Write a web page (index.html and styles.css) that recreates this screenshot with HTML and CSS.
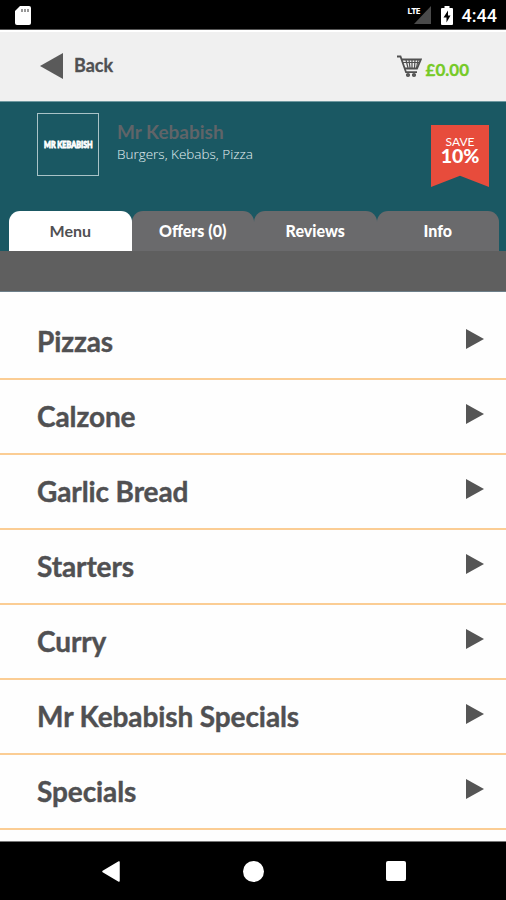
FILE: index.html
```html
<!DOCTYPE html>
<html lang="en">
<head>
    <meta charset="UTF-8">
    <meta name="viewport" content="width=device-width, initial-scale=1.0">
    <title>Mr Kebabish</title>
    <link rel="stylesheet" href="styles.css">
</head>
<body>
    <div class="status-bar">
        <svg class="sd-card" width="16" height="19" viewBox="0 0 16 19">
            <path d="M5 0H14Q16 0 16 2V17Q16 19 14 19H2Q0 19 0 17V5Z" fill="#fff"/>
            <path d="M7 3V6M10 3V6M13 3V6" stroke="#777" stroke-width="1.5"/>
        </svg>
        <div class="status-right">
            <span class="lte">LTE</span>
            <svg class="signal" width="17" height="18" viewBox="0 0 17 18">
                <path d="M17 0V18H0Z" fill="#4a4a4a"/>
            </svg>
            <svg class="battery" width="12" height="19" viewBox="0 0 12 19">
                <path d="M3.5 0H8.5V2H11Q12 2 12 3V18Q12 19 11 19H1Q0 19 0 18V3Q0 2 1 2H3.5Z" fill="#fff"/>
                <path d="M7 4.500L2.500 11.500H5.500V16.500L9.500 9.500H7Z" fill="#000"/>
            </svg>
            <span class="clock">4:44</span>
        </div>
    </div>

    <header class="top-bar">
        <a class="back">
            <svg width="23" height="26" viewBox="0 0 23 26"><path d="M23 0V26L0 13Z" fill="#5a5a5a"/></svg>
            <span>Back</span>
        </a>
        <a class="cart">
            <svg width="25" height="23" viewBox="0 0 25 23" fill="none" stroke="#505050">
                <path d="M0 1.500H3.500L9 17.200H20" stroke-width="1.800"/>
                <path d="M5 4.500H23.800L20 13.500H8" stroke-width="1.800"/>
                <path d="M9 5L11 13M12 5L13 13M15 5V13M18 5L17.500 13M21 5L19.500 13M6 7.500H22.500" stroke-width="1.200"/>
                <circle cx="11" cy="20" r="1.200" stroke-width="1.800"/>
                <circle cx="17" cy="20" r="1.200" stroke-width="1.800"/>
            </svg>
            <span>£0.00</span>
        </a>
    </header>

    <section class="shop">
        <div class="shop-info">
            <div class="logo"><span>MR KEBABISH</span></div>
            <div class="shop-text">
                <h1>Mr Kebabish</h1>
                <p>Burgers, Kebabs, Pizza</p>
            </div>
            <div class="ribbon">
                <span>SAVE</span>
                <strong>10%</strong>
            </div>
        </div>
        <nav class="tabs">
            <a class="tab active">Menu</a>
            <a class="tab">Offers (0)</a>
            <a class="tab">Reviews</a>
            <a class="tab">Info</a>
        </nav>
    </section>
    <div class="strip"></div>

    <ul class="menu">
        <li><span>Pizzas</span><i class="arrow"></i></li>
        <li><span>Calzone</span><i class="arrow"></i></li>
        <li><span>Garlic Bread</span><i class="arrow"></i></li>
        <li><span>Starters</span><i class="arrow"></i></li>
        <li><span>Curry</span><i class="arrow"></i></li>
        <li><span>Mr Kebabish Specials</span><i class="arrow"></i></li>
        <li><span>Specials</span><i class="arrow"></i></li>
    </ul>

    <footer class="nav-bar">
        <svg width="18" height="21" viewBox="0 0 18 21"><path d="M17 1V20L1 10.500Z" fill="#fff" stroke="#fff" stroke-width="1.500" stroke-linejoin="round"/></svg>
        <span class="home"></span>
        <span class="recent"></span>
    </footer>
</body>
</html>
```
FILE: styles.css
```css
* {
    box-sizing: border-box;
}
body {
    font-family: Lato, "Liberation Sans", sans-serif;
    margin: 0;
    height: 900px;
    display: flex;
    flex-direction: column;
    overflow: hidden;
    background: #fefefe;
    color: #505052;
}
.status-bar {
    height: 30px;
    flex: none;
    display: flex;
    justify-content: space-between;
    align-items: flex-start;
    padding: 6px 9px 0 15px;
    background: #000;
    border-bottom: 1px solid #555;
}
.status-right {
    display: flex;
    align-items: flex-start;
    color: #fff;
}
.lte {
    font: bold 9px/9px "Open Sans", sans-serif;
    letter-spacing: -1px;
    margin-right: -6px;
}
.signal {
    margin-right: 1px;
}
.battery {
    margin-left: 9px;
}
.clock {
    font: 500 18px/20px Roboto, sans-serif;
    margin-left: 9px;
}
.top-bar {
    height: 71px;
    flex: none;
    display: flex;
    justify-content: space-between;
    padding: 23px 37px 0 40px;
    background: #f0f0f0;
    border-top: 2px solid #fff;
}
.back {
    display: flex;
    height: 22px;
    align-items: center;
    gap: 11px;
    font-size: 18px;
    font-weight: bold;
    -webkit-text-stroke: 0.3px;
}
.back span {
    margin-bottom: 3px;
}
.cart {
    display: flex;
    align-items: flex-start;
    gap: 4px;
    color: #76ca27;
    font-size: 17px;
    font-weight: bold;
    -webkit-text-stroke: 0.3px;
}
.cart span {
    line-height: 22px;
    padding-top: 4px;
}
.shop {
    height: 150px;
    flex: none;
    display: flex;
    flex-direction: column;
    justify-content: space-between;
    background: #1a5863;
    border-top: 1px solid #6f98a0;
}
.shop-info {
    display: flex;
    padding: 11px 17px 0 37px;
}
.logo {
    width: 62px;
    height: 63px;
    display: flex;
    align-items: center;
    justify-content: center;
    border: 1px solid #a9c3c7;
}
.logo span {
    font-size: 9px;
    font-weight: 900;
    color: #fff;
    white-space: nowrap;
    transform: scaleX(0.8);
    -webkit-text-stroke: 0.8px #fff;
}
.shop-text {
    margin-left: 18px;
    padding-top: 7px;
}
.shop-text h1 {
    margin: 0;
    font-size: 19px;
    line-height: 24px;
    color: #606468;
}
.shop-text p {
    margin: 0;
    font: 300 13.5px/21px "Open Sans", sans-serif;
    color: #e4f0f2;
}
.ribbon {
    width: 58px;
    height: 62px;
    margin: 12px 0 0 auto;
    padding-top: 10px;
    display: flex;
    flex-direction: column;
    align-items: center;
    background: #e74c3c;
    color: #fff;
    clip-path: polygon(0 0, 100% 0, 100% 100%, 50% 82%, 0 100%);
}
.ribbon span {
    font-size: 12px;
    line-height: 13px;
}
.ribbon strong {
    font-size: 19.5px;
    line-height: 16px;
    font-weight: 900;
}
.tabs {
    display: flex;
    padding: 0 7px 0 9px;
}
.tab {
    flex: 1;
    height: 40px;
    line-height: 39px;
    text-align: center;
    font-size: 16px;
    font-weight: 900;
    color: #fff;
    background: #6a6a6c;
    border-radius: 11px 11px 0 0;
}
.tab.active {
    background: #fff;
    color: #505052;
    font-weight: bold;
}
.strip {
    height: 41px;
    flex: none;
    background: #5f5f5f;
    border-bottom: 1px solid #6d7f89;
}
.menu {
    flex: 1;
    margin: 0;
    padding: 13px 0 0;
    list-style: none;
}
.menu li {
    height: 75px;
    display: flex;
    justify-content: space-between;
    align-items: center;
    padding: 0 22px 0 37px;
    border-bottom: 2px solid #fbcd94;
    font-size: 28px;
    font-weight: bold;
    letter-spacing: -0.1px;
    -webkit-text-stroke: 0.4px;
}
.menu span {
    margin-bottom: 2px;
}
.arrow {
    border-left: 18px solid #555;
    border-top: 10px solid transparent;
    border-bottom: 10px solid transparent;
    margin-bottom: 5px;
}
.nav-bar {
    height: 59px;
    flex: none;
    display: flex;
    justify-content: space-between;
    align-items: center;
    padding: 0 100px 0 102px;
    background: #000;
    border-top: 1px solid #777;
}
.home {
    width: 21px;
    height: 21px;
    border-radius: 50%;
    background: #fff;
}
.recent {
    width: 20px;
    height: 20px;
    border-radius: 2px;
    background: #fff;
}
```
